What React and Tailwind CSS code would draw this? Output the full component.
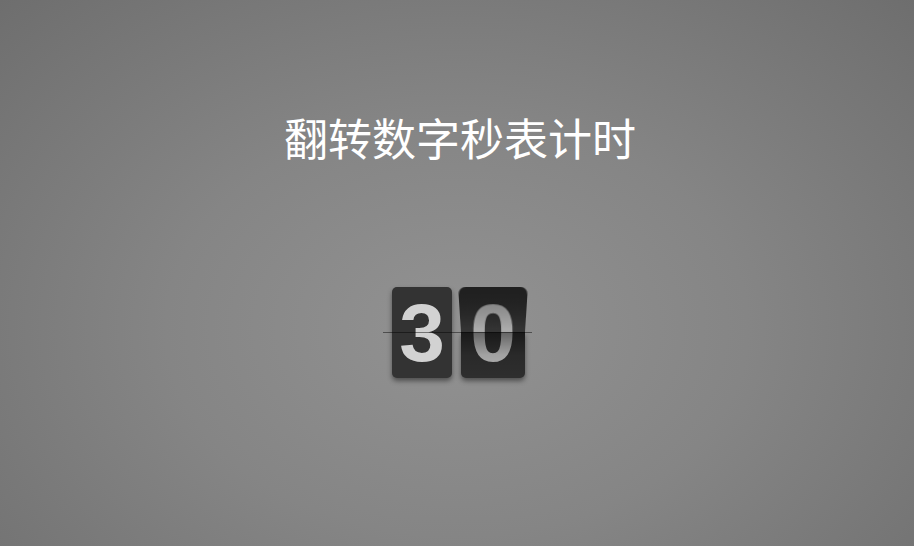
import React from "react";

function StaticCard({ digit }) {
  return (
    <div className="relative w-[60px] h-[91px] rounded-[5px] bg-[#333333] shadow-[0_3px_5px_rgba(0,0,0,0.45)] overflow-hidden">
      <div className="absolute inset-0 text-center text-[82px] leading-[91px] font-bold text-[#d2d2d2] [font-family:'Liberation_Sans',Arial,sans-serif]">
        {digit}
      </div>
    </div>
  );
}

function FlipCard({ digit }) {
  return (
    <div className="relative w-[64px] h-[91px] flex flex-col">
      <div className="relative h-[44px] mt-[1px] w-full origin-bottom [transform:perspective(180px)_rotateX(-20deg)] rounded-t-[7px] bg-[#2c2c2c] overflow-hidden">
        <div className="absolute left-0 top-[-1px] w-full h-[91px] text-center text-[82px] leading-[91px] font-bold text-[#acacac] [font-family:'Liberation_Sans',Arial,sans-serif]">
          {digit}
        </div>
        <div className="absolute inset-0 bg-gradient-to-b from-black/30 to-white/5" />
      </div>
      <div className="relative h-[46px] w-full rounded-b-[5px] bg-[#2e2e2e] overflow-hidden shadow-[0_3px_5px_rgba(0,0,0,0.45)]">
        <div aria-hidden="true" className="absolute left-0 top-[-45px] w-full h-[91px] text-center text-[82px] leading-[91px] font-bold text-[#b4b4b4] [font-family:'Liberation_Sans',Arial,sans-serif]">
          {digit}
        </div>
        <div className="absolute inset-0 bg-gradient-to-b from-black/45 via-black/10 to-transparent" />
      </div>
    </div>
  );
}

export default function App() {
  return (
    <div className="w-full h-[546px] overflow-hidden flex flex-col items-center bg-[radial-gradient(ellipse_at_50%_60%,#929292_0%,#858585_45%,#6e6e6e_100%)]">
      <h1 className="mt-[115px] text-[44px] leading-none font-normal text-white [font-family:'Noto_Sans_CJK_SC','Noto_Sans',sans-serif] pl-[6px]">
        翻转数字秒表计时
      </h1>
      <div className="relative mt-[128px] flex gap-[9px] pl-[3px]">
        <StaticCard digit="3" />
        <FlipCard digit="0" />
        <div className="absolute left-[-6px] right-[-7px] top-[45px] h-px bg-black/45" />
      </div>
    </div>
  );
}
